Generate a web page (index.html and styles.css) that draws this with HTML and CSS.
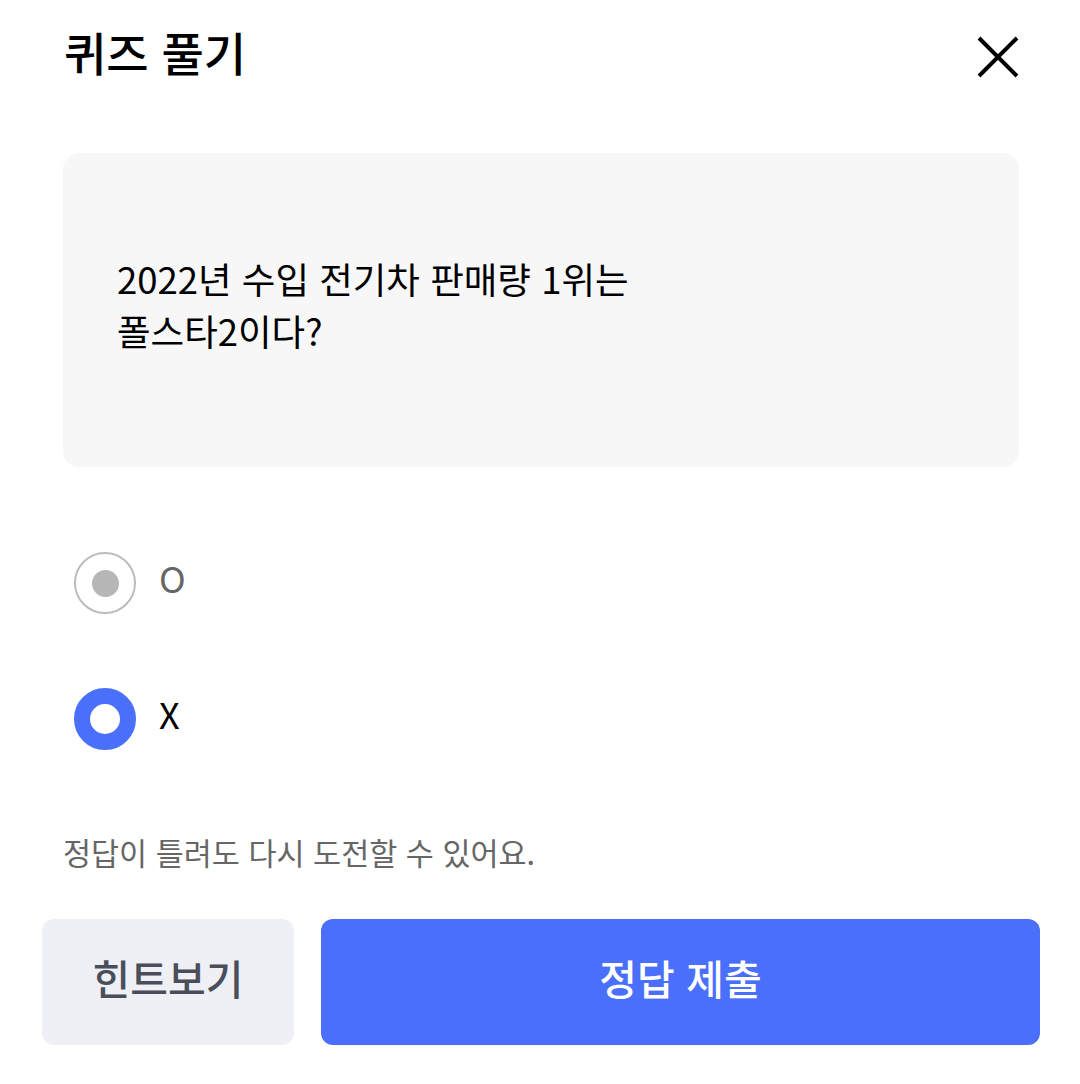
FILE: index.html
```html
<!DOCTYPE html>
<html lang="ko">
<head>
<meta charset="utf-8">
<link rel="stylesheet" href="styles.css">
</head>
<body>
<div class="page">
  <header class="header">
    <h1 class="title">퀴즈 풀기</h1>
    <button class="close" aria-label="닫기">
      <svg width="42" height="42" viewBox="0 0 42 42"><path d="M2 2 L40 40 M40 2 L2 40" stroke="#000" stroke-width="4" fill="none"/></svg>
    </button>
  </header>
  <section class="question">
    <p class="question-text">2022년 수입 전기차 판매량 1위는<br>폴스타2이다?</p>
  </section>
  <div class="options">
    <label class="option">
      <span class="radio radio-off"><span class="dot"></span></span>
      <span class="opt-label muted">O</span>
    </label>
    <label class="option">
      <span class="radio radio-on"></span>
      <span class="opt-label">X</span>
    </label>
  </div>
  <p class="hint">정답이 틀려도 다시 도전할 수 있어요.</p>
  <div class="actions">
    <button class="btn btn-hint">힌트보기</button>
    <button class="btn btn-submit">정답 제출</button>
  </div>
</div>
</body>
</html>
```
FILE: styles.css
```css
* { box-sizing: border-box; }
html, body { margin: 0; padding: 0; background: #fff; }
body {
  font-family: "Noto Sans CJK KR", "Noto Sans", sans-serif;
  color: #000;
}
.page {
  width: 1080px;
  height: 1084px;
  display: flex;
  flex-direction: column;
}
.header {
  height: 114px;
  display: flex;
  align-items: center;
  justify-content: space-between;
  padding: 0 61px 0 64px;
}
.title {
  margin: 0 0 13px;
  font-size: 46px;
  font-weight: 500;
  line-height: 1;
}
.close {
  border: 0;
  background: none;
  padding: 0;
  width: 42px;
  height: 42px;
  display: flex;
}
.question {
  margin: 39px 61px 0 63px;
  height: 314px;
  background: #f7f7f7;
  border-radius: 16px;
  display: flex;
  align-items: center;
  padding: 0 54px;
}
.question-text {
  margin: 0 0 10px;
  font-size: 36.5px;
  line-height: 52px;
  color: #000;
}
.options {
  margin-top: 85px;
  padding-left: 74px;
  display: flex;
  flex-direction: column;
  gap: 74px;
}
.option {
  display: flex;
  align-items: center;
  gap: 23px;
  height: 62px;
}
.radio {
  width: 62px;
  height: 62px;
  border-radius: 50%;
  display: flex;
  align-items: center;
  justify-content: center;
  flex: none;
}
.radio-off {
  border: 2px solid #bcbcbc;
}
.radio-off .dot {
  width: 27px;
  height: 27px;
  border-radius: 50%;
  background: #b6b6b6;
}
.radio-on {
  border: 16px solid #4a70fb;
  background: #fff;
}
.opt-label {
  font-size: 36px;
  line-height: 1;
  color: #000;
  margin-top: -13px;
}
.opt-label.muted { color: #666; }
.hint {
  margin: 82px 0 0 63px;
  font-size: 30.5px;
  line-height: 40px;
  color: #666;
}
.actions {
  margin-top: 47px;
  padding: 0 40px 0 42px;
  display: flex;
  gap: 27px;
}
.btn {
  height: 126px;
  border: 0;
  border-radius: 12px;
  font-family: inherit;
  font-size: 41px;
  font-weight: 500;
  display: flex;
  align-items: center;
  justify-content: center;
  padding-bottom: 12px;
}
.btn-hint {
  width: 252px;
  background: #eef0f5;
  color: #4a4e5a;
}
.btn-submit {
  flex: 1;
  background: #4a70fb;
  color: #fff;
}
```
